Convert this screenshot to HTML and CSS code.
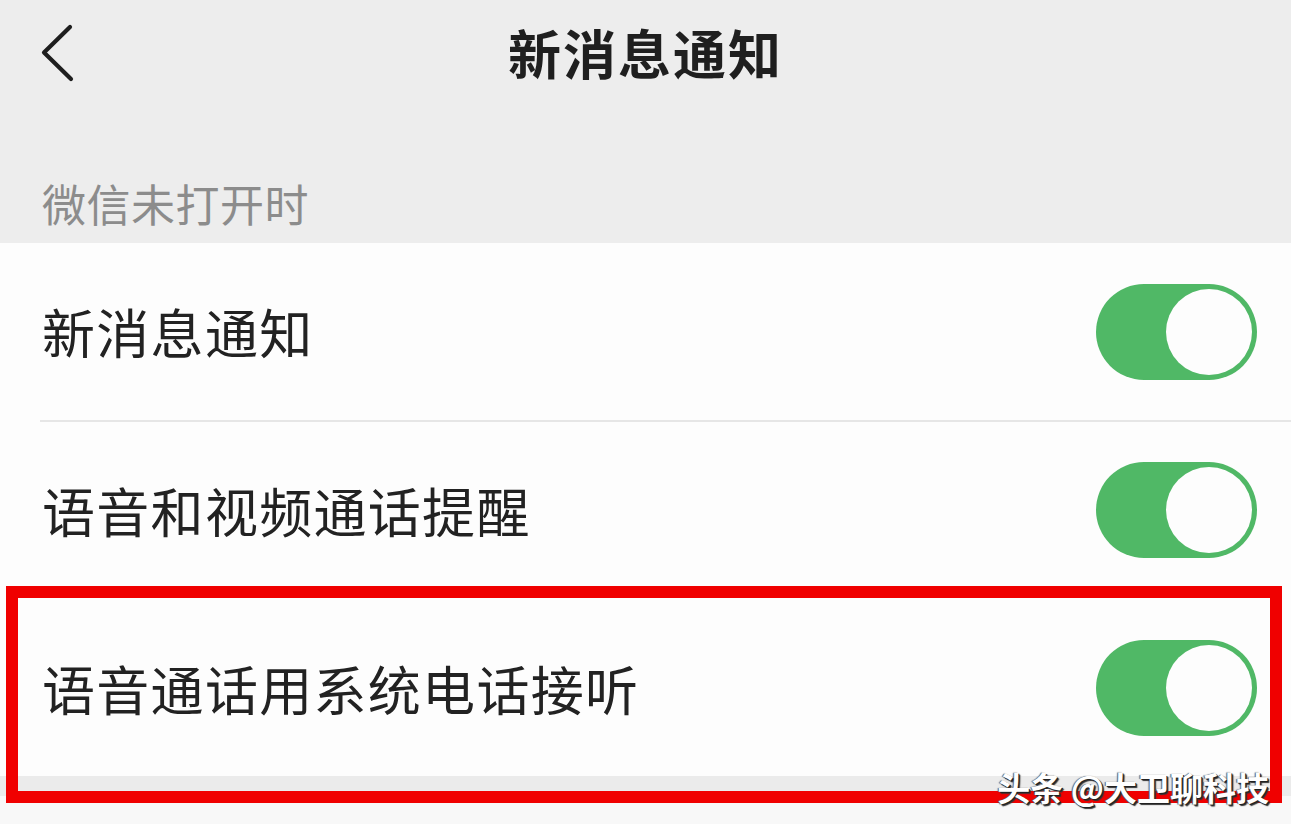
FILE: index.html
```html
<!DOCTYPE html>
<html lang="zh-CN">
<head>
    <meta charset="UTF-8">
    <meta name="viewport" content="width=device-width, initial-scale=1.0">
    <title>新消息通知</title>
    <link rel="stylesheet" href="styles.css">
</head>
<body>
    <div class="topbar">
        <div class="back">
            <svg width="34" height="58" viewBox="0 0 34 58">
                <polyline points="30,3 4,28.5 31,55" fill="none" stroke="#1e1e1e" stroke-width="4.2" stroke-linecap="round" stroke-linejoin="round"/>
            </svg>
        </div>
        <h1>新消息通知</h1>
        <div></div>
    </div>

    <div class="section-title">微信未打开时</div>

    <div class="list">
        <div class="row">
            <span class="label">新消息通知</span>
            <span class="switch"></span>
        </div>
        <div class="row">
            <span class="label">语音和视频通话提醒</span>
            <span class="switch"></span>
        </div>
        <div class="row marked">
            <span class="label">语音通话用系统电话接听</span>
            <span class="switch"></span>
        </div>
    </div>

    <div class="gap"></div>
    <div class="list-bottom"></div>

    <div class="watermark">头条 @大卫聊科技</div>
</body>
</html>
```

FILE: styles.css
```css
* {
    font-family: "Noto Sans CJK SC", "Noto Sans", sans-serif;
    padding: 0;
    margin: 0;
    box-sizing: border-box;
}

body {
    background-color: #ededed;
    width: 1291px;
    height: 824px;
    overflow: hidden;
    position: relative;
}

.topbar {
    height: 104px;
    display: grid;
    grid-template-columns: 1fr auto 1fr;
    align-items: center;
}

.back {
    padding-left: 40px;
    padding-top: 2px;
    display: flex;
}

.topbar h1 {
    font-size: 53px;
    line-height: 1;
    font-weight: 700;
    color: #1f1f1f;
    letter-spacing: 2px;
}

.section-title {
    height: 139px;
    padding: 77px 0 0 42px;
    font-size: 44px;
    line-height: 1;
    color: #8c8c8c;
    letter-spacing: 0.5px;
}

.list {
    background-color: #fdfdfd;
    padding-left: 40px;
}

.row {
    height: 177px;
    display: flex;
    align-items: center;
    justify-content: space-between;
    padding: 0 34px 0 2px;
    position: relative;
}

.row + .row {
    height: 178px;
    border-top: 2px solid #e6e6e6;
}

.row.marked {
    border-top-color: #fdfdfd;
}

.label {
    font-size: 53px;
    line-height: 1;
    color: #222;
    letter-spacing: 1.3px;
}

.switch {
    width: 161px;
    height: 96px;
    border-radius: 48px;
    background-color: #50b866;
    position: relative;
}

.switch::after {
    content: "";
    position: absolute;
    top: 5px;
    right: 5px;
    width: 86px;
    height: 86px;
    border-radius: 50%;
    background-color: #fdfdfd;
}

/* rote Markierung */
.marked::after {
    content: "";
    position: absolute;
    top: -14px;
    bottom: -27px;
    left: -34px;
    right: 9px;
    border: 12px solid #f00000;
}

.gap {
    height: 20px;
    background-color: #ebebeb;
}

.list-bottom {
    height: 60px;
    background-color: #f8f8f8;
}

.watermark {
    position: absolute;
    right: 22px;
    bottom: 20px;
    font-size: 33px;
    line-height: 1;
    font-weight: 700;
    color: #fff;
    text-shadow: 1px 1px 0 #222, 2px 2px 1px #333, -1px 0 1px #555;
}
```
